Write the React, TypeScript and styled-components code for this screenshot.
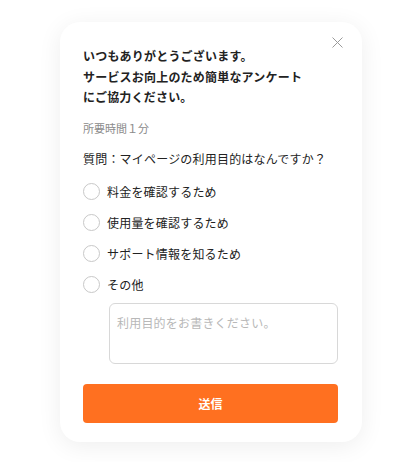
import React, { useState } from 'react';
import styled, { createGlobalStyle } from 'styled-components';

const GlobalStyle = createGlobalStyle`
  html, body {
    margin: 0;
    padding: 0;
    background: #ffffff;
  }
  body {
    font-family: "Noto Sans CJK JP", "Noto Sans", sans-serif;
    color: #222;
  }
`;

const options = [
  '料金を確認するため',
  '使用量を確認するため',
  'サポート情報を知るため',
  'その他',
];

const App = () => {
  const [selected, setSelected] = useState<number | null>(null);

  return (
    <>
      <GlobalStyle />
      <Page>
        <Card>
          <CloseButton aria-label="閉じる">
            <svg width="11" height="11" viewBox="0 0 11 11">
              <path d="M0.5 0.5 L10.5 10.5 M10.5 0.5 L0.5 10.5" stroke="#9a9a9a" strokeWidth="1" fill="none" />
            </svg>
          </CloseButton>
          <Title>
            いつもありがとうございます。
            <br />
            サービスお向上のため簡単なアンケート
            <br />
            にご協力ください。
          </Title>
          <Duration>所要時間１分</Duration>
          <Question>質問：マイページの利用目的はなんですか？</Question>
          <OptionList>
            {options.map((label, i) => (
              <OptionRow key={label} onClick={() => setSelected(i)}>
                <Radio $checked={selected === i} />
                <OptionLabel>{label}</OptionLabel>
              </OptionRow>
            ))}
          </OptionList>
          <TextArea placeholder="利用目的をお書きください。" />
          <SubmitButton>送信</SubmitButton>
        </Card>
      </Page>
    </>
  );
};

const Page = styled.div`
  width: 420px;
  height: 462px;
  padding: 22px 0 0 60px;
  box-sizing: border-box;
  background: #ffffff;
`;

const Card = styled.div`
  position: relative;
  width: 302px;
  height: 420px;
  box-sizing: border-box;
  padding: 24px 24px 19px 23px;
  background: #ffffff;
  border-radius: 20px;
  box-shadow: 0 4px 24px rgba(0, 0, 0, 0.07);
  display: flex;
  flex-direction: column;
`;

const CloseButton = styled.button`
  position: absolute;
  top: 15px;
  right: 19px;
  width: 11px;
  height: 11px;
  padding: 0;
  border: none;
  background: none;
  display: flex;
  cursor: pointer;
`;

const Title = styled.h2`
  margin: 0;
  font-size: 12px;
  letter-spacing: 0.2px;
  line-height: 20.5px;
  font-weight: 700;
  color: #222;
`;

const Duration = styled.p`
  margin: 12px 0 0;
  font-size: 11px;
  line-height: 16px;
  color: #8a8a8a;
`;

const Question = styled.p`
  margin: 14px 0 0;
  font-size: 12px;
  letter-spacing: 0.2px;
  line-height: 18px;
  color: #222;
`;

const OptionList = styled.div`
  margin-top: 14px;
  display: flex;
  flex-direction: column;
  gap: 11px;
`;

const OptionRow = styled.label`
  display: flex;
  align-items: center;
  gap: 7px;
  height: 20px;
  cursor: pointer;
`;

const Radio = styled.span<{ $checked: boolean }>`
  width: 17px;
  height: 17px;
  box-sizing: border-box;
  border-radius: 50%;
  border: 1.5px solid ${(p) => (p.$checked ? '#ff7020' : '#c8c8c8')};
  background: #fff;
  flex-shrink: 0;
  box-shadow: ${(p) => (p.$checked ? 'inset 0 0 0 3px #fff, inset 0 0 0 10px #ff7020' : 'none')};
`;

const OptionLabel = styled.span`
  font-size: 12px;
  letter-spacing: 0.2px;
  color: #222;
`;

const TextArea = styled.textarea`
  margin: 8px 0 0 26px;
  height: 62px;
  box-sizing: border-box;
  padding: 10px 7px;
  border: 1px solid #d8d8d8;
  border-radius: 6px;
  resize: none;
  font-family: "Noto Sans CJK JP", "Noto Sans", sans-serif;
  font-size: 12px;
  letter-spacing: 0.2px;
  color: #222;
  outline: none;
  &::placeholder {
    color: #b8b8b8;
  }
`;

const SubmitButton = styled.button`
  margin-top: 20px;
  height: 39px;
  border: none;
  border-radius: 4px;
  background: #ff7020;
  color: #fff;
  font-family: "Noto Sans CJK JP", "Noto Sans", sans-serif;
  font-size: 12px;
  font-weight: 700;
  cursor: pointer;
`;

export default App;
